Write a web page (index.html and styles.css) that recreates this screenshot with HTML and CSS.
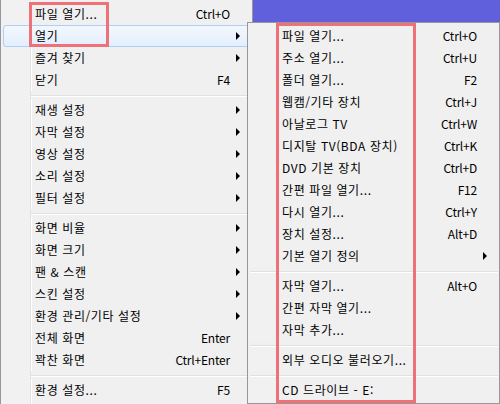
FILE: index.html
```html
<!DOCTYPE html>
<html lang="ko">
<head>
  <meta charset="UTF-8" />
  <title>열기 메뉴</title>
  <link rel="stylesheet" href="styles.css">
</head>
<body>
  <div class="menu main">
    <div class="item"><span class="label">파일 열기...</span><span class="key">Ctrl+O</span><span class="arr"></span></div>
    <div class="item active"><span class="label">열기</span><span class="key"></span><span class="arr"><i class="tri"></i></span></div>
    <div class="item"><span class="label">즐겨 찾기</span><span class="key"></span><span class="arr"><i class="tri"></i></span></div>
    <div class="item"><span class="label">닫기</span><span class="key">F4</span><span class="arr"></span></div>
    <div class="sep"></div>
    <div class="item"><span class="label">재생 설정</span><span class="key"></span><span class="arr"><i class="tri"></i></span></div>
    <div class="item"><span class="label">자막 설정</span><span class="key"></span><span class="arr"><i class="tri"></i></span></div>
    <div class="item"><span class="label">영상 설정</span><span class="key"></span><span class="arr"><i class="tri"></i></span></div>
    <div class="item"><span class="label">소리 설정</span><span class="key"></span><span class="arr"><i class="tri"></i></span></div>
    <div class="item"><span class="label">필터 설정</span><span class="key"></span><span class="arr"><i class="tri"></i></span></div>
    <div class="sep"></div>
    <div class="item"><span class="label">화면 비율</span><span class="key"></span><span class="arr"><i class="tri"></i></span></div>
    <div class="item"><span class="label">화면 크기</span><span class="key"></span><span class="arr"><i class="tri"></i></span></div>
    <div class="item"><span class="label">팬 &amp; 스캔</span><span class="key"></span><span class="arr"><i class="tri"></i></span></div>
    <div class="item"><span class="label">스킨 설정</span><span class="key"></span><span class="arr"><i class="tri"></i></span></div>
    <div class="item"><span class="label">환경 관리/기타 설정</span><span class="key"></span><span class="arr"><i class="tri"></i></span></div>
    <div class="item"><span class="label">전체 화면</span><span class="key">Enter</span><span class="arr"></span></div>
    <div class="item"><span class="label">꽉찬 화면</span><span class="key">Ctrl+Enter</span><span class="arr"></span></div>
    <div class="sep"></div>
    <div class="item"><span class="label">환경 설정...</span><span class="key">F5</span><span class="arr"></span></div>
  </div>

  <div class="menu sub">
    <div class="item"><span class="label">파일 열기...</span><span class="key">Ctrl+O</span><span class="arr"></span></div>
    <div class="item"><span class="label">주소 열기...</span><span class="key">Ctrl+U</span><span class="arr"></span></div>
    <div class="item"><span class="label">폴더 열기...</span><span class="key">F2</span><span class="arr"></span></div>
    <div class="item"><span class="label">웹캠/기타 장치</span><span class="key">Ctrl+J</span><span class="arr"></span></div>
    <div class="item"><span class="label">아날로그 TV</span><span class="key">Ctrl+W</span><span class="arr"></span></div>
    <div class="item"><span class="label">디지탈 TV(BDA 장치)</span><span class="key">Ctrl+K</span><span class="arr"></span></div>
    <div class="item"><span class="label">DVD 기본 장치</span><span class="key">Ctrl+D</span><span class="arr"></span></div>
    <div class="item"><span class="label">간편 파일 열기...</span><span class="key">F12</span><span class="arr"></span></div>
    <div class="item"><span class="label">다시 열기...</span><span class="key">Ctrl+Y</span><span class="arr"></span></div>
    <div class="item"><span class="label">장치 설정...</span><span class="key">Alt+D</span><span class="arr"></span></div>
    <div class="item"><span class="label">기본 열기 정의</span><span class="key"></span><span class="arr"><i class="tri"></i></span></div>
    <div class="sep"></div>
    <div class="item"><span class="label">자막 열기...</span><span class="key">Alt+O</span><span class="arr"></span></div>
    <div class="item"><span class="label">간편 자막 열기...</span><span class="key"></span><span class="arr"></span></div>
    <div class="item"><span class="label">자막 추가...</span><span class="key"></span><span class="arr"></span></div>
    <div class="sep"></div>
    <div class="item"><span class="label">외부 오디오 불러오기...</span><span class="key"></span><span class="arr"></span></div>
    <div class="sep"></div>
    <div class="item"><span class="label">CD 드라이브 - E:</span><span class="key"></span><span class="arr"></span></div>
  </div>

  <div class="mark mark-main"></div>
  <div class="mark mark-sub"></div>
</body>
</html>
```

FILE: styles.css
```css
body {
  margin: 0;
  width: 500px;
  height: 404px;
  overflow: hidden;
  position: relative;
  background: #6060dc;
  font-family: "Noto Sans CJK KR", "Noto Sans", sans-serif;
  font-size: 12px;
  color: #000;
}
.menu {
  box-sizing: border-box;
  width: 253px;
  background:
    linear-gradient(to right, #f1f1f1 0 29px, #e2e3e3 29px 30px, #fff 30px 31px, #f0f0f0 31px);
}
.menu.main {
  height: 404px;
  padding-top: 3px;
  border-left: 1px solid #979797;
  border-right: 1px solid #979797;
}
.menu.sub {
  position: absolute;
  left: 247px;
  top: 22px;
  height: 382px;
  padding: 2px 0;
  border: 1px solid #979797;
}
.item {
  display: flex;
  align-items: center;
  height: 22px;
  box-sizing: border-box;
  padding-left: 34px;
  margin: 0 2px;
  line-height: 22px;
  white-space: nowrap;
}
.item .label {
  flex: 1;
  margin-left: -2px;
  letter-spacing: 0.6px;
}
.item .key {
  text-align: right;
  letter-spacing: -0.2px;
}
.item .arr {
  width: 20px;
  height: 22px;
  display: flex;
  align-items: center;
}
.tri {
  display: block;
  width: 0;
  height: 0;
  margin-left: 6px;
  border-top: 4px solid transparent;
  border-bottom: 4px solid transparent;
  border-left: 4px solid #000;
}
.item.active {
  border: 1px solid #aecff7;
  border-radius: 3px;
  background: linear-gradient(#f3f8fe, #e3eefc);
  padding-left: 33px;
}
.item.active .arr {
  margin-right: -1px;
}
.sep {
  height: 8px;
  margin-left: 30px;
  background: linear-gradient(#f0f0f0 0 4px, #e0e0e0 4px 5px, #fff 5px 6px, #f0f0f0 6px);
}
.sub .sep {
  margin: 0 1px 0 2px;
}
.mark {
  position: absolute;
  box-sizing: border-box;
  border: 3px solid #ee7079;
}
.mark-main {
  left: 29px;
  top: 2px;
  width: 80px;
  height: 45px;
}
.mark-sub {
  left: 276px;
  top: 23px;
  width: 140px;
  height: 380px;
}
```
